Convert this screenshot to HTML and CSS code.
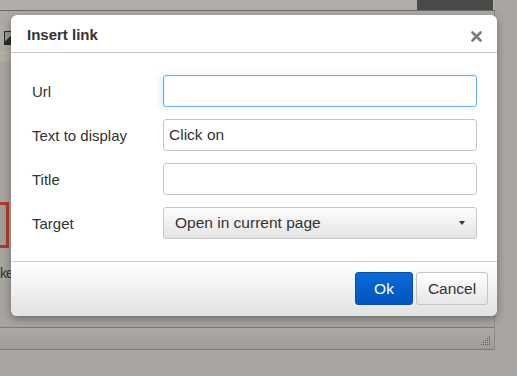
FILE: index.html
```html
<!DOCTYPE html>
<html>
<head>
<meta charset="utf-8">
<link rel="stylesheet" href="styles.css">
</head>
<body>
<div class="editor">
  <div class="menubar"><div class="menubar-dark"></div></div>
  <div class="toolbar"><div class="tool-icon"></div></div>
  <div class="stripe"></div>
  <div class="content">
    <div class="red-box"></div>
    <div class="frag">ke</div>
  </div>
  <div class="statusbar">
    <svg class="grip" width="10" height="10" viewBox="0 0 10 10">
      <g fill="#5f5d5a">
        <rect x="8" y="0" width="1" height="1"/>
        <rect x="6" y="2" width="1" height="1"/><rect x="8" y="2" width="1" height="1"/>
        <rect x="4" y="4" width="1" height="1"/><rect x="6" y="4" width="1" height="1"/><rect x="8" y="4" width="1" height="1"/>
        <rect x="2" y="6" width="1" height="1"/><rect x="4" y="6" width="1" height="1"/><rect x="6" y="6" width="1" height="1"/><rect x="8" y="6" width="1" height="1"/>
        <rect x="0" y="8" width="1" height="1"/><rect x="2" y="8" width="1" height="1"/><rect x="4" y="8" width="1" height="1"/><rect x="6" y="8" width="1" height="1"/><rect x="8" y="8" width="1" height="1"/>
      </g>
    </svg>
  </div>
</div>

<div class="dialog">
  <div class="dlg-head">
    <span class="dlg-title">Insert link</span>
    <svg class="dlg-close" width="11" height="11" viewBox="0 0 11 11">
      <path d="M1.5 1.5 L9.5 9.5 M9.5 1.5 L1.5 9.5" stroke="#7d7d7d" stroke-width="2.6" stroke-linecap="round"/>
    </svg>
  </div>
  <div class="dlg-body">
    <div class="row">
      <label class="lbl">Url</label>
      <div class="field focus"></div>
    </div>
    <div class="row">
      <label class="lbl">Text to display</label>
      <div class="field">Click on</div>
    </div>
    <div class="row">
      <label class="lbl">Title</label>
      <div class="field"></div>
    </div>
    <div class="row">
      <label class="lbl">Target</label>
      <div class="select">
        <span>Open in current page</span>
        <span class="caret"></span>
      </div>
    </div>
  </div>
  <div class="dlg-foot">
    <button class="btn primary">Ok</button>
    <button class="btn">Cancel</button>
  </div>
</div>
</body>
</html>
```
FILE: styles.css
```css
html, body {
  margin: 0;
  padding: 0;
}
body {
  width: 517px;
  height: 376px;
  overflow: hidden;
  background: #a9a6a1;
  font-family: "Liberation Sans", Arial, sans-serif;
  position: relative;
}
.editor {
  width: 494px;
  border-right: 1px solid #8d8b87;
  display: flex;
  flex-direction: column;
}
.menubar {
  height: 10px;
  background: #b1aeaa;
  border-bottom: 1px solid #6d6b68;
  position: relative;
  margin-right: -1px;
}
.menubar-dark {
  position: absolute;
  left: 417px;
  top: 0;
  width: 76px;
  height: 10px;
  background: #4a4a4a;
}
.toolbar {
  height: 41px;
  background: #aeaba7;
  display: flex;
  align-items: flex-start;
}
.tool-icon {
  margin: 20px 0 0 4px;
  width: 7px;
  height: 12px;
  border: 1px solid #2c2c2c;
  background: linear-gradient(135deg, #9a9894 50%, #2c2c2c 50%);
}
.stripe {
  height: 8px;
  background: #b3ae9f;
  border-top: 1px solid #b9b6b1;
}
.content {
  height: 266px;
  background: #a8a5a0;
  display: flex;
  flex-direction: column;
}
.red-box {
  margin-top: 141px;
  width: 6px;
  height: 40px;
  border: 3px solid #b0392d;
  border-left: none;
  background: #a19e99;
}
.frag {
  margin: 16px 0 0 0;
  font-size: 14px;
  color: #333;
  line-height: 18px;
  letter-spacing: -1px;
}
.statusbar {
  height: 21px;
  border-top: 1px solid #7c7a77;
  border-bottom: 1px solid #7c7a77;
  background: linear-gradient(#aeaba7, #9f9c98);
  display: flex;
  justify-content: flex-end;
  align-items: flex-end;
}
.grip {
  margin: 0 3px 3px 0;
}

.dialog {
  position: absolute;
  left: 11px;
  top: 15px;
  width: 486px;
  height: 301px;
  background: #fff;
  border-radius: 6px;
  box-shadow: 0 3px 8px rgba(0, 0, 0, 0.35);
  display: flex;
  flex-direction: column;
  overflow: hidden;
}
.dlg-head {
  height: 37px;
  border-bottom: 1px solid #c8c8c8;
  display: flex;
  align-items: center;
  justify-content: space-between;
  padding: 0 15px 0 16px;
  flex-shrink: 0;
}
.dlg-title {
  font-weight: bold;
  font-size: 15px;
  color: #333;
  margin-top: 1px;
}
.dlg-close {
  margin-top: 5px;
}
.dlg-body {
  flex: 1;
  padding: 22px 20px 0 21px;
  display: flex;
  flex-direction: column;
  gap: 12px;
}
.row {
  display: flex;
  align-items: center;
  height: 32px;
}
.lbl {
  width: 131px;
  font-size: 15px;
  color: #333;
}
.field {
  box-sizing: border-box;
  width: 314px;
  height: 32px;
  border: 1px solid #c5c5c5;
  border-radius: 3px;
  font-size: 15.5px;
  color: #333;
  padding: 0 5px;
  display: flex;
  align-items: center;
}
.field.focus {
  border-color: #6aacea;
  box-shadow: inset 1px 1px 1px rgba(0, 0, 0, 0.05), -3px 0 6px rgba(82, 168, 236, 0.2);
}
.select {
  box-sizing: border-box;
  width: 314px;
  height: 32px;
  border: 1px solid #c8c8c8;
  border-radius: 3px;
  background: linear-gradient(#fdfdfd, #e4e4e4);
  font-size: 15.5px;
  color: #333;
  padding: 0 10px 0 11px;
  display: flex;
  align-items: center;
  justify-content: space-between;
}
.caret {
  width: 0;
  height: 0;
  border-left: 3px solid transparent;
  border-right: 3px solid transparent;
  border-top: 4px solid #333;
  margin-right: 1px;
}
.dlg-foot {
  height: 55px;
  border-top: 1px solid #d0d0d0;
  background: linear-gradient(#ffffff, #e2e2e2);
  display: flex;
  justify-content: flex-end;
  align-items: flex-start;
  padding: 10px 9px 0 0;
  gap: 3px;
  box-sizing: border-box;
  flex-shrink: 0;
}
.btn {
  height: 33px;
  padding: 0 6px;
  border: 1px solid #c5c5c5;
  border-radius: 3px;
  background: linear-gradient(#ffffff, #e6e6e6);
  font-family: "Liberation Sans", Arial, sans-serif;
  font-size: 15.5px;
  color: #333;
  width: 72px;
}
.btn.primary {
  width: 58px;
  border-color: #0b4fa6;
  background: linear-gradient(#0a6ad6, #0154c0);
  color: #fff;
}
```
